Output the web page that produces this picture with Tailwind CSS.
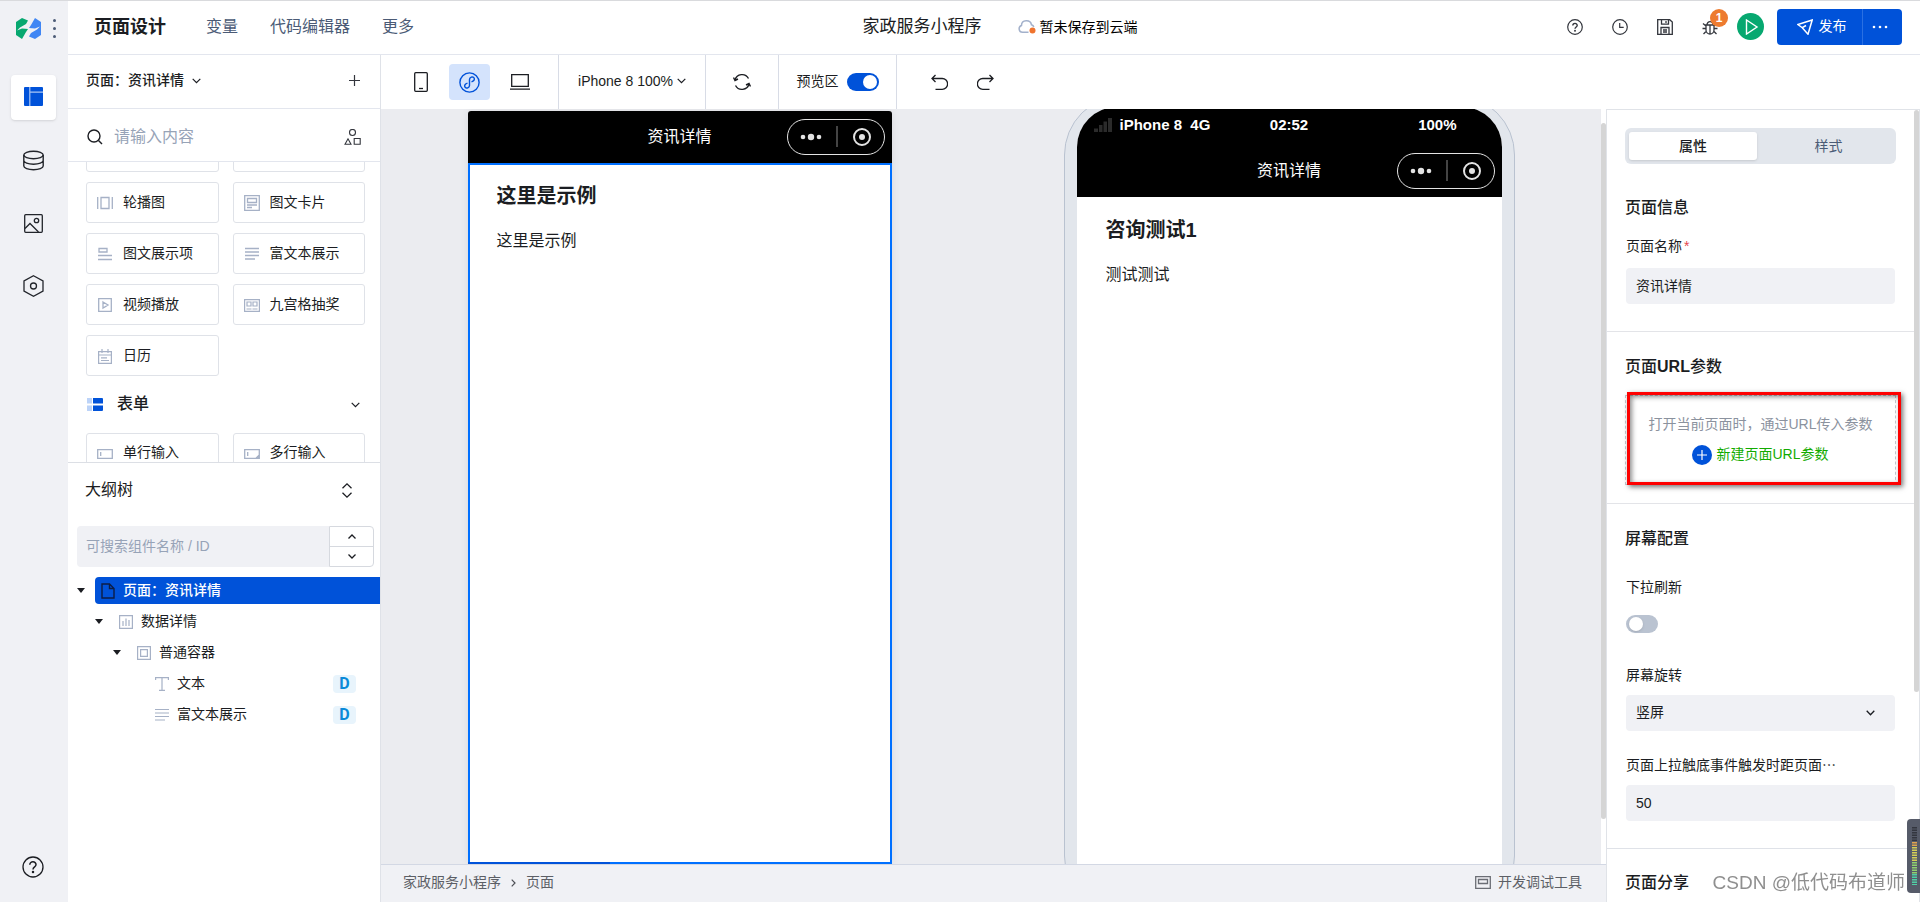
<!DOCTYPE html>
<html lang="zh-CN">
<head>
<meta charset="utf-8">
<title>页面设计</title>
<script src="https://cdn.jsdelivr.net/npm/@tailwindcss/browser@4"></script>
</head>
<body class="flex h-screen overflow-hidden border-t border-[#d9dadd] bg-white font-['Liberation_Sans','Noto_Sans_CJK_SC',sans-serif] text-sm text-[#1b1d22]">

<!-- Icon rail -->
<nav class="flex w-[68px] shrink-0 flex-col items-center bg-[#f0f1f5] pr-0.5 pb-6" aria-label="主导航">
  <div class="flex h-[54px] w-full items-center gap-3 pl-4">
    <svg class="h-[21px] w-[25px]" viewBox="0 0 25 21"><path d="M0 4 6 0 12 2.500 10 6 4 9.500 1 12.500 6 10.500 12 11 10 14 6 21 0 17Z" fill="#07a870"/><path d="M25 17 19 21 13 18.500 15 15 21 11.500 24 8.500 19 10.500 13 10 15 7 19 0 25 4Z" fill="#4086f4"/></svg>
    <svg class="h-[19px] w-[3px]" viewBox="0 0 3 19" fill="#4b5b76"><circle cx="1.500" cy="1.500" r="1.500"/><circle cx="1.500" cy="9.500" r="1.500"/><circle cx="1.500" cy="17.500" r="1.500"/></svg>
  </div>
  <button class="mt-5 flex size-[45px] items-center justify-center rounded bg-white pb-0.5 shadow-sm" aria-label="页面">
    <svg class="size-[19px]" viewBox="0 0 19 19" fill="#0052d9"><rect width="19" height="19" rx="1"/><path d="M5.800 0v19M5.800 5.200H19" stroke="#a9c6f5" stroke-width="1.200"/></svg>
  </button>
  <button class="mt-[30px] flex h-5 items-center justify-center" aria-label="数据">
    <svg class="size-[21px]" viewBox="0 0 21 21" fill="none" stroke="#22252b" stroke-width="1.400"><ellipse cx="10.500" cy="5" rx="9.700" ry="3.700"/><path d="M.8 5v11c0 2 4.300 3.700 9.700 3.700s9.700-1.700 9.700-3.700V5M.8 10.500c0 2 4.300 3.700 9.700 3.700s9.700-1.700 9.700-3.700"/></svg>
  </button>
  <button class="mt-[43px] flex h-5 items-center justify-center" aria-label="素材">
    <svg class="size-[19px]" viewBox="0 0 19 19" fill="none" stroke="#22252b" stroke-width="1.300"><rect x=".7" y=".7" width="17.600" height="17.600" rx="1"/><circle cx="12.500" cy="6.500" r="2.200"/><path d="M1 14.500 6 9.500 14.500 18"/></svg>
  </button>
  <button class="mt-[43px] flex h-5 items-center justify-center" aria-label="设置">
    <svg class="h-[22px] w-[21px]" viewBox="0 0 21 22" fill="none" stroke="#22252b" stroke-width="1.300"><path d="M10.500.8 20 6v10l-9.500 5.200L1 16V6Z"/><circle cx="10.500" cy="11" r="3"/></svg>
  </button>
  <button class="mt-auto" aria-label="帮助">
    <svg class="size-[22px]" viewBox="0 0 22 22" fill="none" stroke="#1b1d22" stroke-width="1.300"><circle cx="11" cy="11" r="10"/><path d="M7.800 8.800C7.800 4.700 14.200 5 14 8.800c-.1 2-3 2.200-3 4.700" stroke-width="1.500"/><circle cx="11" cy="16" r=".6" fill="#1b1d22"/></svg>
  </button>
</nav>

<div class="flex min-w-0 flex-1 flex-col">

  <!-- Top bar -->
  <header class="grid h-[54px] shrink-0 grid-cols-[1fr_auto_1fr] items-center border-b border-[#e3e6ee] pr-[18px] pb-0.5 pl-[26px]">
    <nav class="flex items-center gap-8 text-base text-[#4b5b76]">
      <h1 class="mr-2 text-lg font-bold text-[#1b1d22]">页面设计</h1>
      <a href="#">变量</a>
      <a href="#">代码编辑器</a>
      <a href="#">更多</a>
    </nav>
    <div class="flex items-center gap-9 pl-1">
      <span class="text-[17px] leading-6">家政服务小程序</span>
      <span class="flex items-center gap-1 text-black"><svg class="h-[15px] w-[18px]" viewBox="0 0 18 15"><path d="M10.500 13.300H4.500A3.500 3.500 0 0 1 3.500 6.500C3.500.5 12.500.3 13.500 5.800c1 .3 2 1 2.300 2.200" fill="none" stroke="#a3b1cb" stroke-width="1.500"/><circle cx="14.500" cy="11.500" r="3" fill="#f0742e"/></svg>暂未保存到云端</span>
    </div>
    <div class="flex items-center justify-end">
      <div class="flex items-center gap-[29px] text-[#33363d]">
        <button aria-label="帮助"><svg class="size-4" viewBox="0 0 16 16" fill="none" stroke="currentColor" stroke-width="1.200"><circle cx="8" cy="8" r="7.300"/><path d="M5.800 6.500c0-3 4.500-2.700 4.400 0C10.100 8 8 8 8 9.800" stroke-width="1.400"/><circle cx="8" cy="11.800" r=".4" fill="currentColor"/></svg></button>
        <button aria-label="历史"><svg class="size-4" viewBox="0 0 16 16" fill="none" stroke="currentColor" stroke-width="1.200"><circle cx="8" cy="8" r="7.300"/><path d="M7.700 4v4.300h4"/></svg></button>
        <button aria-label="保存"><svg class="size-4" viewBox="0 0 16 16" fill="none" stroke="currentColor" stroke-width="1.300"><path d="M.7.700h12L15.300 3v12.300H.7ZM4.500.7v4.500h7V.7M4 15.300V8.500h8v6.800M6 11h4M6 13h4M9 2v2"/></svg></button>
        <button class="relative" aria-label="问题 1">
          <svg class="size-4" viewBox="0 0 16 16" fill="none" stroke="currentColor" stroke-width="1.300"><path d="M4 6h8v5a4 4 0 0 1-8 0ZM8 6v9M5 6c0-4.500 6-4.500 6 0M1 4.500 4 7M15 4.500 12 7M.5 9.500H4M15.500 9.500H12M1.500 15 4.500 12M14.500 15l-3-3"/></svg>
          <span class="absolute -top-2.5 left-2 flex size-[18px] items-center justify-center rounded-full bg-[#ed7b2f] text-xs font-bold text-white">1</span>
        </button>
      </div>
      <button class="ml-[19px] flex size-[27px] items-center justify-center rounded-full bg-[#07a870]" aria-label="预览"><svg class="size-4" viewBox="0 0 16 16" fill="none" stroke="#fff" stroke-width="1.400"><path d="M3.500 1 14 8 3.500 15Z"/></svg></button>
      <div class="ml-[13px] flex h-9 overflow-hidden rounded bg-[#0052d9] text-white">
        <button class="flex w-[86px] items-center justify-center gap-1.5 border-r border-[#2a70e2] pl-1"><svg class="size-4" viewBox="0 0 16 16" fill="none" stroke="#fff" stroke-width="1.500"><path d="M15.200 1 .8 5.500l4.500 3.200L11 15.200ZM5.300 8.700 9 6.500"/></svg><span class="pb-0.5">发布</span></button>
        <button class="flex w-[39px] items-center justify-center pr-1.5" aria-label="更多操作"><svg class="h-1 w-4" viewBox="0 0 16 4" fill="#fff"><circle cx="2" cy="2" r="1.300"/><circle cx="8" cy="2" r="1.300"/><circle cx="14" cy="2" r="1.300"/></svg></button>
      </div>
    </div>
  </header>

  <div class="flex min-h-0 flex-1">

    <!-- Left panel -->
    <aside class="flex w-[313px] shrink-0 flex-col border-r border-[#dfe2e8]">
      <div class="flex h-[54px] shrink-0 items-center border-b border-[#e3e6ee] pr-5 pb-0.5 pl-[18px]">
        <button class="flex items-center gap-2 pb-0.5 font-medium">页面：资讯详情<svg class="mt-0.5 h-1.5 w-[9px]" viewBox="0 0 9 6" fill="none" stroke="#1b1d22" stroke-width="1.200"><path d="M.7.800 4.500 4.700 8.300.8"/></svg></button>
        <button class="ml-auto" aria-label="新建页面"><svg class="size-[11px]" viewBox="0 0 11 11" stroke="#33363d" stroke-width="1.200"><path d="M5.500 0v11M0 5.500h11"/></svg></button>
      </div>
      <div class="flex h-[53px] shrink-0 items-center border-b border-[#e3e6ee] pt-1 pr-[19px] pl-[19px]">
        <svg class="size-4 shrink-0" viewBox="0 0 16 16" fill="none" stroke="#1b1d22" stroke-width="1.400"><circle cx="7" cy="7" r="6"/><path d="m11.500 11.500 3.500 3.500"/></svg>
        <input class="ml-[11px] min-w-0 flex-1 text-base outline-none placeholder:text-[#97a3b7]" placeholder="请输入内容" aria-label="搜索组件">
        <button aria-label="组件分类"><svg class="h-4 w-[17px]" viewBox="0 0 17 16" fill="none" stroke="#33363d" stroke-width="1.100"><circle cx="8.500" cy="3.500" r="3"/><path d="M1 15.200 4 9.800 7 15.200ZM10.200 9.500h6v5.800h-6Z"/></svg></button>
      </div>

      <div class="flex h-[301px] shrink-0 flex-col overflow-hidden border-b border-[#dcdfe5] px-[18px] pr-[15px]">
        <div class="-mt-[31px] grid shrink-0 grid-cols-2 gap-x-3.5 gap-y-2.5">
          <span class="h-[41px] rounded-[3px] border border-[#dfe2e8]"></span>
          <span class="h-[41px] rounded-[3px] border border-[#dfe2e8]"></span>
          <button class="flex h-[41px] items-center gap-2.5 rounded-[3px] border border-[#dfe2e8] px-2.5"><svg class="size-4" viewBox="0 0 16 16" fill="none" stroke="#a6b1c6" stroke-width="1.300"><path d="M.7 2v12M15.300 2v12M4 2.500h8v11H4Z"/></svg><span class="pb-0.5">轮播图</span></button>
          <button class="flex h-[41px] items-center gap-2.5 rounded-[3px] border border-[#dfe2e8] px-2.5"><svg class="size-4" viewBox="0 0 16 16" fill="none" stroke="#a6b1c6" stroke-width="1.300"><path d="M.7.700h14.600v14.600H.7ZM3.500 3.500h9v4h-9ZM3 10h10M3 12.500h5"/></svg><span class="pb-0.5">图文卡片</span></button>
          <button class="flex h-[41px] items-center gap-2.5 rounded-[3px] border border-[#dfe2e8] px-2.5"><svg class="size-4" viewBox="0 0 16 16" fill="none" stroke="#a6b1c6" stroke-width="1.300"><path d="M2 2.500h8v3.500H2ZM1 9.500h14M1 13.500h14"/></svg><span class="pb-0.5">图文展示项</span></button>
          <button class="flex h-[41px] items-center gap-2.5 rounded-[3px] border border-[#dfe2e8] px-2.5"><svg class="size-4" viewBox="0 0 16 16" fill="none" stroke="#a6b1c6" stroke-width="1.300"><path d="M1 2.500h14M1 6h14M1 9.500h14M1 13h10"/></svg><span class="pb-0.5">富文本展示</span></button>
          <button class="flex h-[41px] items-center gap-2.5 rounded-[3px] border border-[#dfe2e8] px-2.5"><svg class="size-4" viewBox="0 0 16 16" fill="none" stroke="#a6b1c6" stroke-width="1.300"><path d="M1.700 1.700h12.600v12.600H1.700ZM6 5l5 3-5 3Z"/></svg><span class="pb-0.5">视频播放</span></button>
          <button class="flex h-[41px] items-center gap-2.5 rounded-[3px] border border-[#dfe2e8] px-2.5"><svg class="size-4" viewBox="0 0 16 16" fill="none" stroke="#a6b1c6" stroke-width="1.200"><path d="M.6 2.600h14.800v11.800H.6ZM3 5h4v4H3ZM9 5h4v4H9ZM2.500 12h5M8.500 12h5"/></svg><span class="pb-0.5">九宫格抽奖</span></button>
          <button class="flex h-[41px] items-center gap-2.5 rounded-[3px] border border-[#dfe2e8] px-2.5"><svg class="size-4" viewBox="0 0 16 16" fill="none" stroke="#a6b1c6" stroke-width="1.200"><path d="M1.600 3.600h12.800v11.800H1.600ZM1.600 7h12.800M5 1v4M11 1v4M4 9.800h6M4 12.500h8"/></svg><span class="pb-0.5">日历</span></button>
        </div>
        <button class="flex h-[57px] shrink-0 items-center text-base font-medium">
          <svg class="mr-3.5 ml-px h-[13px] w-4" viewBox="0 0 16 13"><path d="M0 0h5v5.500H0ZM0 7.500h5V13H0Z" fill="#bcd3f8"/><path d="M6 0h9a1 1 0 0 1 1 1v4.500H6ZM6 7.500h10V12a1 1 0 0 1-1 1H6Z" fill="#0052d9"/></svg>
          <span class="pb-0.5">表单</span>
          <svg class="mr-[5px] ml-auto h-1.5 w-[9px]" viewBox="0 0 9 6" fill="none" stroke="#1b1d22" stroke-width="1.200"><path d="M.7.800 4.500 4.700 8.300.8"/></svg>
        </button>
        <div class="grid shrink-0 grid-cols-2 gap-x-3.5">
          <button class="flex h-[41px] items-center gap-2.5 rounded-[3px] border border-[#dfe2e8] px-2.5"><svg class="size-4" viewBox="0 0 16 16" fill="none" stroke="#a6b1c6" stroke-width="1.300"><path d="M.7 3.700h14.600v8.600H.7ZM3.700 6v4"/></svg><span class="pb-1">单行输入</span></button>
          <button class="flex h-[41px] items-center gap-2.5 rounded-[3px] border border-[#dfe2e8] px-2.5"><svg class="size-4" viewBox="0 0 16 16" fill="none" stroke="#a6b1c6" stroke-width="1.300"><path d="M.7 3.700h14.600v8.600H.7ZM3.700 6v4M12 12.300l3.300-3.300M14 12.300l1.300-1.300"/></svg><span class="pb-1">多行输入</span></button>
        </div>
      </div>

      <!-- Outline tree -->
      <div class="flex h-[54px] shrink-0 items-center justify-between pr-7 pl-[17px] text-base">
        <h2>大纲树</h2>
        <button aria-label="展开"><svg class="h-[15px] w-2.5" viewBox="0 0 10 15" fill="none" stroke="#1b1d22" stroke-width="1.300"><path d="M.5 5.200 5 .9l4.500 4.300M.5 9.800 5 14.100l4.500-4.300"/></svg></button>
      </div>
      <div class="mt-[9px] flex h-[41px] shrink-0 pr-1.5 pl-[9px]">
        <input class="min-w-0 flex-1 rounded-l bg-[#f0f1f5] px-[9px] pb-0.5 outline-none placeholder:text-[#97a3b7]" placeholder="可搜索组件名称 / ID" aria-label="搜索大纲树">
        <div class="flex w-[45px] flex-col rounded-r-sm border border-[#d6d9df]">
          <button class="flex flex-1 items-center justify-center border-b border-[#d6d9df]" aria-label="上一个"><svg class="h-[5px] w-2" viewBox="0 0 8 5" fill="none" stroke="#1b1d22" stroke-width="1.300"><path d="M.5 4.500 4 1l3.500 3.500"/></svg></button>
          <button class="flex flex-1 items-center justify-center" aria-label="下一个"><svg class="h-[5px] w-2" viewBox="0 0 8 5" fill="none" stroke="#1b1d22" stroke-width="1.300"><path d="M.5.500 4 4 7.500.5"/></svg></button>
        </div>
      </div>
      <ul class="mt-2.5 flex flex-col gap-1 pl-[9px]">
        <li class="flex h-[27px] items-center">
          <svg class="mr-2.5 h-[5px] w-2" viewBox="0 0 8 5" fill="#1b1d22"><path d="M0 0h8L4 5Z"/></svg>
          <button class="flex h-full flex-1 items-center gap-2 rounded-l-sm bg-[#0052d9] pl-1.5 font-medium text-white"><svg class="h-4 w-[14px]" viewBox="0 0 14 16" fill="none" stroke="#0c1d45" stroke-width="1.400"><path d="M1 1h7.500L13 5.500V15H1ZM8.500 1v4.500H13"/></svg><span class="pb-0.5">页面：资讯详情</span></button>
        </li>
        <li class="flex h-[27px] items-center pl-[18px]">
          <svg class="mr-4 h-[5px] w-2" viewBox="0 0 8 5" fill="#1b1d22"><path d="M0 0h8L4 5Z"/></svg>
          <svg class="mr-2 size-[14px]" viewBox="0 0 14 14" fill="none" stroke="#a6b1c6" stroke-width="1.200"><path d="M.6.600h12.800v12.800H.6ZM4 6v5M7 3.500V11M10 5v6"/></svg><span class="pb-0.5">数据详情</span>
        </li>
        <li class="flex h-[27px] items-center pl-9">
          <svg class="mr-4 h-[5px] w-2" viewBox="0 0 8 5" fill="#1b1d22"><path d="M0 0h8L4 5Z"/></svg>
          <svg class="mr-2 size-[14px]" viewBox="0 0 14 14" fill="none" stroke="#a6b1c6" stroke-width="1.200"><path d="M.6.600h12.800v12.800H.6ZM3.600 3.600h6.800v6.800H3.600Z"/></svg><span class="pb-0.5">普通容器</span>
        </li>
        <li class="flex h-[27px] items-center pr-6 pl-[78px]">
          <svg class="mr-2 size-[14px]" viewBox="0 0 14 14" fill="none" stroke="#a6b1c6" stroke-width="1.200"><path d="M.6 3V.6h12.800V3M7 .6v12.800M4 13.400h6"/></svg><span class="pb-0.5">文本</span>
          <span class="ml-auto flex h-[18px] w-[23px] items-center justify-center rounded bg-[#e8f4fc] font-['Roboto'] text-base font-bold text-[#0b8ad8]">D</span>
        </li>
        <li class="flex h-[27px] items-center pr-6 pl-[78px]">
          <svg class="mr-2 size-[14px]" viewBox="0 0 14 14" fill="none" stroke="#a6b1c6" stroke-width="1.200"><path d="M0 1.500h14M0 5h14M0 8.500h14M0 12h10"/></svg><span class="pb-0.5">富文本展示</span>
          <span class="ml-auto flex h-[18px] w-[23px] items-center justify-center rounded bg-[#e8f4fc] font-['Roboto'] text-base font-bold text-[#0b8ad8]">D</span>
        </li>
      </ul>
    </aside>

    <div class="flex min-w-0 flex-1 flex-col">
      <!-- Canvas toolbar -->
      <div class="flex h-[54px] shrink-0 items-stretch divide-x divide-[#d8dce6]">
        <div class="flex w-[178px] items-center justify-between pr-7 pl-[33px]">
          <button aria-label="手机"><svg class="h-5 w-[14px]" viewBox="0 0 14 20" fill="none" stroke="#1b1d22" stroke-width="1.300"><rect x=".7" y=".7" width="12.600" height="18.600" rx="1"/><path d="M5 16.500h4"/></svg></button>
          <button class="flex h-9 w-[41px] items-center justify-center rounded bg-[#d4e3fc]" aria-label="小程序"><svg class="size-[21px]" viewBox="0 0 21 21" fill="none" stroke="#0052d9" stroke-width="1.400"><circle cx="10.500" cy="10.500" r="9.600"/><path d="M12.500 9.800c5-1.500 2.500-5.800-.3-4.600-1 .4-1.700 1.100-1.700 2.300v6c0 1.200-.7 1.900-1.700 2.300-2.800 1.200-5.300-3.100-.3-4.600"/></svg></button>
          <button aria-label="电脑"><svg class="h-4 w-5" viewBox="0 0 20 16" fill="none" stroke="#1b1d22" stroke-width="1.300"><path d="M1.700.7h16.600v11.600H1.700ZM0 15.200h20"/></svg></button>
        </div>
        <button class="flex w-[147px] items-center justify-center gap-1 pb-0.5">iPhone 8 100%<svg class="h-1.5 w-[9px]" viewBox="0 0 9 6" fill="none" stroke="#1b1d22" stroke-width="1.200"><path d="M.7.800 4.500 4.700 8.300.8"/></svg></button>
        <button class="flex w-[73px] items-center justify-center" aria-label="刷新"><svg class="size-[18px]" viewBox="0 0 18 18" fill="none" stroke="#1b1d22" stroke-width="1.400"><path d="M2 7a7.300 7.300 0 0 1 13.500-1.500M16 11A7.300 7.300 0 0 1 2.500 12.500M.5 4.500 2 7.500l3-1.500M17.500 13.500 16 10.500l-3 1.500"/></svg></button>
        <label class="flex w-[118px] items-center justify-center gap-2"><span class="pb-0.5">预览区</span><input type="checkbox" checked class="flex h-[18px] w-8 appearance-none items-center justify-end rounded-full bg-[#0052d9] px-0.5 before:size-[14px] before:rounded-full before:bg-white"></label>
        <div class="flex flex-1 items-center gap-[29px] pl-[34px]">
          <button aria-label="撤销"><svg class="size-[17px]" viewBox="0 0 17 17" fill="none" stroke="#1b1d22" stroke-width="1.300"><path d="M4.500 1 1 4.500 4.500 8M1 4.500h10.200a5.400 5.400 0 0 1 0 10.800H4.500"/></svg></button>
          <button aria-label="重做"><svg class="size-[17px]" viewBox="0 0 17 17" fill="none" stroke="#1b1d22" stroke-width="1.300"><path d="M12.500 1 16 4.500 12.500 8M16 4.500H5.800a5.400 5.400 0 0 0 0 10.800h6.700"/></svg></button>
        </div>
      </div>

      <div class="flex min-h-0 flex-1">
        <div class="flex min-w-0 flex-1 flex-col">
          <!-- Canvas -->
          <main class="flex min-h-0 flex-1">
            <div class="flex min-w-0 flex-1 justify-center gap-[172px] overflow-hidden bg-[#ebecf0]">
              <section class="mt-0.5 flex w-[424px] shrink-0 flex-col rounded-t bg-white shadow-[0_0_8px_rgba(0,0,0,0.08)]">
                <div class="grid h-[52px] shrink-0 grid-cols-[1fr_auto_1fr] items-center rounded-t-[3px] bg-black px-[7px] text-base text-white">
                  <span class="col-start-2">资讯详情</span>
                  <svg class="h-9 w-[98px] justify-self-end" viewBox="0 0 98 36" fill="none" stroke="#e3e3e3"><rect x=".5" y=".5" width="97" height="35" rx="17.500"/><path d="M50 7v21" stroke="#888"/><circle cx="75" cy="18" r="8" stroke-width="2"/><circle cx="75" cy="18" r="3" fill="#e3e3e3" stroke="none"/><g fill="#e3e3e3" stroke="none"><circle cx="16" cy="18" r="2.300"/><circle cx="24" cy="18" r="3.200"/><circle cx="32" cy="18" r="2.300"/></g></svg>
                </div>
                <div class="flex flex-1 flex-col border-2 border-[#0070ff] px-[27px] pt-4">
                  <h2 class="text-xl leading-[30px] font-bold">这里是示例</h2>
                  <p class="mt-[18px] text-base leading-6">这里是示例</p>
                </div>
                <div class="-mt-0.5 h-0.5 w-[142px] bg-[#0052d9]"></div>
              </section>

              <section class="-mt-3.5 -mb-[52px] flex w-[451px] shrink-0 flex-col rounded-[60px] border border-[#b9c2d0] bg-[#e2e6ec] px-3 pt-[11px] pb-3">
                <div class="flex flex-1 flex-col overflow-hidden rounded-[40px] bg-white">
                  <div class="flex shrink-0 flex-col bg-black text-white">
                    <div class="grid h-9 grid-cols-[1fr_auto_1fr] items-center px-[17px] text-[15px] font-bold">
                      <span class="flex items-center gap-2 whitespace-pre"><svg class="h-[14px] w-[18px]" viewBox="0 0 18 14" fill="#2b2b2b"><path d="M0 10.500h4V14H0ZM5 7h3.500v7H5ZM9.500 3.500H13V14H9.500ZM14 0h4v14h-4Z"/></svg>iPhone 8  4G</span>
                      <span>02:52</span>
                      <span class="justify-self-end pr-7">100%</span>
                    </div>
                    <div class="grid h-[54px] grid-cols-[1fr_auto_1fr] items-center px-[7px] pt-0.5 text-base">
                      <span class="col-start-2">资讯详情</span>
                      <svg class="h-9 w-[98px] justify-self-end" viewBox="0 0 98 36" fill="none" stroke="#e3e3e3"><rect x=".5" y=".5" width="97" height="35" rx="17.500"/><path d="M50 7v21" stroke="#888"/><circle cx="75" cy="18" r="8" stroke-width="2"/><circle cx="75" cy="18" r="3" fill="#e3e3e3" stroke="none"/><g fill="#e3e3e3" stroke="none"><circle cx="16" cy="18" r="2.300"/><circle cx="24" cy="18" r="3.200"/><circle cx="32" cy="18" r="2.300"/></g></svg>
                    </div>
                  </div>
                  <div class="px-[29px] pt-[18px]">
                    <h2 class="text-xl leading-[30px] font-bold">咨询测试1</h2>
                    <p class="mt-[18px] text-base leading-6">测试测试</p>
                  </div>
                </div>
              </section>
            </div>
            <div class="w-[5px] shrink-0 bg-white pt-[14px] pb-[45px]"><div class="h-full rounded-full bg-[#d5d5d5]"></div></div>
          </main>
          <!-- Status bar -->
          <footer class="flex h-[38px] shrink-0 items-center justify-between border-t border-[#d3d8e4] bg-[#f0f1f5] pr-6 pb-1 pl-[22px] text-[#5c5f66]">
            <nav class="flex items-center gap-2.5"><a href="#">家政服务小程序</a><svg class="mt-0.5 h-2 w-[5px]" viewBox="0 0 5 8" fill="none" stroke="#4c4f56" stroke-width="1.200"><path d="M.7.700 4 4 .7 7.300"/></svg><a href="#">页面</a></nav>
            <button class="flex items-center gap-[7px]"><svg class="mt-0.5 h-[13px] w-4" viewBox="0 0 16 13" fill="none" stroke="#6b6e75" stroke-width="1.300"><path d="M.7.700h14.600v11.600H.7ZM3.500 3.500h9v4h-9Z"/></svg>开发调试工具</button>
          </footer>
        </div>

        <!-- Properties panel -->
        <aside class="flex w-[314px] shrink-0 border-t border-l border-[#e0e3e8]">
          <div class="flex min-w-0 flex-1 flex-col overflow-hidden">
            <div class="shrink-0 border-b border-[#e3e4e8] px-[18px] pt-[18px] pb-[27px]">
              <div class="flex h-9 w-[271px] rounded-md bg-[#e2e6ec] p-1">
                <button class="w-32 rounded-[3px] bg-white font-medium shadow-sm">属性</button>
                <button class="flex-1 pl-2 text-[#4b5b76]">样式</button>
              </div>
              <h2 class="mt-8 text-base leading-6 font-medium">页面信息</h2>
              <label class="mt-4 flex flex-col gap-3 pl-px leading-5"><span>页面名称<span class="ml-0.5 text-[#e5484d]">*</span></span><input class="h-9 w-[269px] rounded bg-[#f0f1f5] px-2.5 pb-0.5 outline-none" value="资讯详情"></label>
            </div>
            <div class="h-[172px] shrink-0 border-b border-[#e3e4e8] px-[18px] pt-[23px]">
              <h2 class="text-base leading-6 font-medium">页面<span class="font-bold">URL</span>参数</h2>
              <div class="relative mt-4 flex h-[90px] w-[271px] flex-col items-center border border-dashed border-[#c3c7cf] pt-[18px] whitespace-nowrap">
                <p class="leading-5 text-[#8b929e]">打开当前页面时，通过URL传入参数</p>
                <button class="mt-2.5 flex items-center gap-1 leading-5 text-[#12ab00]"><svg class="size-5" viewBox="0 0 20 20"><circle cx="10" cy="10" r="10" fill="#0052d9"/><path d="M10 5v10M5 10h10" stroke="#fff" stroke-width="1.200"/></svg><span class="pb-0.5">新建页面URL参数</span></button>
                <div class="pointer-events-none absolute -top-1 right-[-6px] -bottom-px left-px border-[3px] border-[#fe0000] shadow-[2px_2px_5px_rgba(0,0,0,0.55),inset_2px_2px_5px_rgba(0,0,0,0.45)]"></div>
              </div>
            </div>
            <div class="h-[345px] shrink-0 border-b border-[#dfe2e8] pt-[23px] pl-[18px]">
              <h2 class="text-base leading-6 font-medium">屏幕配置</h2>
              <label class="mt-[26px] flex w-32 flex-col pl-px leading-5">下拉刷新<input type="checkbox" class="mt-[18px] flex h-[18px] w-8 appearance-none items-center rounded-full bg-[#bac3d1] px-[3px] before:size-[14px] before:rounded-full before:bg-white before:shadow"></label>
              <label class="mt-8 flex flex-col gap-2.5 pl-px leading-5">屏幕旋转
                <span class="grid w-[269px] items-center"><select class="col-start-1 row-start-1 h-9 appearance-none rounded bg-[#f0f1f5] px-2.5 pb-0.5 outline-none"><option>竖屏</option></select><svg class="col-start-1 row-start-1 mr-5 h-1.5 w-[9px] justify-self-end" viewBox="0 0 9 6" fill="none" stroke="#1b1d22" stroke-width="1.300"><path d="M.7.800 4.500 4.700 8.300.8"/></svg></span>
              </label>
              <label class="mt-6 flex flex-col gap-2.5 pl-px leading-5">页面上拉触底事件触发时距页面⋯<input class="h-9 w-[269px] rounded bg-[#f0f1f5] px-2.5 outline-none" value="50"></label>
            </div>
            <h2 class="shrink-0 pt-[22px] pl-[18px] text-base leading-6 font-medium">页面分享</h2>
          </div>
          <div class="w-1.5 shrink-0 border-r border-[#e0e3e8]"><div class="h-[582px] rounded-full bg-[#d5d5d5]"></div></div>
        </aside>
      </div>
    </div>
  </div>
</div>

<!-- Floating watermark and level meter -->
<div class="pointer-events-none fixed right-[15px] bottom-[5px] text-[19px] leading-7 text-[#8f8f8f]">CSDN @低代码布道师</div>
<div class="pointer-events-none fixed right-0 bottom-[9px] h-[74px] w-[13px] rounded-l bg-[#565b69] pt-2 pl-[5px]">
  <svg class="h-[58px] w-[5px]" viewBox="0 0 5 58"><path d="M2.500 0v15" stroke="#33363f" stroke-width="5" stroke-dasharray="1.500 1"/><path d="M2.500 15v5" stroke="#e0a44e" stroke-width="5" stroke-dasharray="1.500 1"/><path d="M2.500 20v14" stroke="#d3cf57" stroke-width="5" stroke-dasharray="1.500 1"/><path d="M2.500 35v12" stroke="#8fd26e" stroke-width="5" stroke-dasharray="1.500 1"/><path d="M2.500 47v11" stroke="#4fd0a5" stroke-width="5" stroke-dasharray="1.500 1"/></svg>
</div>
</body>
</html>
